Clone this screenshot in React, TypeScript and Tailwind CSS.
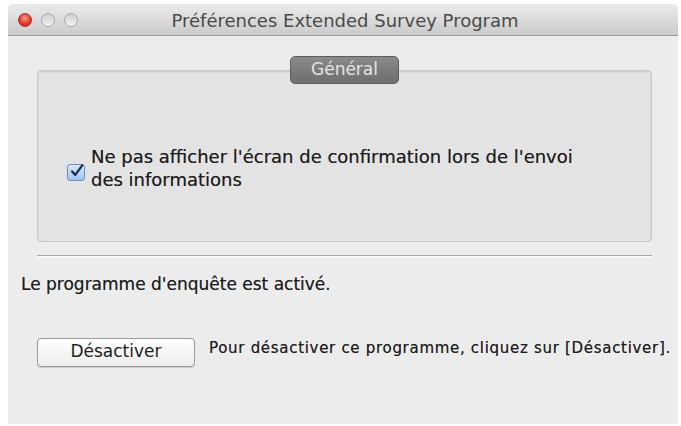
import React from "react";

export default function App() {
  const font = { fontFamily: '"DejaVu Sans", "Open Sans", sans-serif' };
  return (
    <div className="w-[681px] h-[426px] bg-white pl-[8px] pt-[4px] pr-[3px] pb-[2px]" style={font}>
      <div className="w-full h-full bg-[#ececec] flex flex-col rounded-t-[5px] overflow-hidden">
        <div className="h-[32px] shrink-0 bg-gradient-to-b from-[#ebebeb] to-[#cbcbcb] border-b border-[#9a9a9a] flex items-center relative">
          <div className="absolute left-[10px] top-[9px] flex gap-[9px]">
            <div className="w-[14px] h-[14px] rounded-full bg-[radial-gradient(circle_at_50%_35%,#ff9a8a,#e3332a_60%,#b8221c)] border border-[#a8342c]" />
            <div className="w-[14px] h-[14px] rounded-full bg-gradient-to-b from-[#cfcfcf] to-[#f2f2f2] border border-[#a9a9a9]" />
            <div className="w-[14px] h-[14px] rounded-full bg-gradient-to-b from-[#cfcfcf] to-[#f2f2f2] border border-[#a9a9a9]" />
          </div>
          <div className="flex-1 text-center text-[18px] text-[#4a4a4a] pt-[1px] pl-[4px]">Préférences Extended Survey Program</div>
        </div>
        <div className="flex-1 flex flex-col pl-[29px] pr-[26px] pt-[34px] text-[#1e1e1e] [text-shadow:0_0_0.6px_rgba(0,0,0,0.55)]">
          <div className="relative h-[172px] bg-[#e3e3e3] border border-[#c9c9c9] rounded-[4px] shadow-[inset_0_1px_2px_rgba(0,0,0,0.12)]">
            <div className="absolute left-[252px] top-[-15px] w-[109px] h-[28px] rounded-[5px] bg-gradient-to-b from-[#8a8a8a] to-[#6e6e6e] border border-[#5e5e5e] flex items-center justify-center text-[17px] text-[#e4e4e4] [text-shadow:none]">
              Général
            </div>
            <div className="flex items-start pl-[29px] pt-[74px]">
              <div className="mt-[19px] w-[18px] h-[17px] rounded-[3px] border border-[#6b8fb8] bg-gradient-to-b from-[#d7e9fb] to-[#9fc4ee] flex items-center justify-center [text-shadow:none]">
                <svg width="16" height="16" viewBox="0 0 16 16" className="-mt-[3px] ml-[2px]">
                  <path d="M2.5 8.5 L6 12.5 L14 1.5" stroke="#1a2c55" strokeWidth="2.6" fill="none" strokeLinecap="round" strokeLinejoin="round" />
                </svg>
              </div>
              <div className="ml-[6px] text-[18px] leading-[23px]">
                Ne pas afficher l'écran de confirmation lors de l'envoi<br />des informations
              </div>
            </div>
          </div>
          <div className="mt-[13px] h-[3px] border-t border-[#a8a8a8] bg-[#f7f7f7] [text-shadow:none]" />
          <div className="mt-[14px] -ml-[16px] text-[17px]">Le programme d'enquête est activé.</div>
          <div className="mt-[40px] flex items-start">
            <button className="shrink-0 w-[158px] h-[29px] rounded-[4px] border border-[#9d9d9d] bg-gradient-to-b from-white to-[#ececec] shadow-[0_1px_1px_rgba(0,0,0,0.15)] text-[17px] text-[#1e1e1e]">
              Désactiver
            </button>
            <div className="ml-[14px] -mt-[1px] whitespace-nowrap text-[15px] tracking-[0.7px]">Pour désactiver ce programme, cliquez sur [Désactiver].</div>
          </div>
        </div>
      </div>
    </div>
  );
}
